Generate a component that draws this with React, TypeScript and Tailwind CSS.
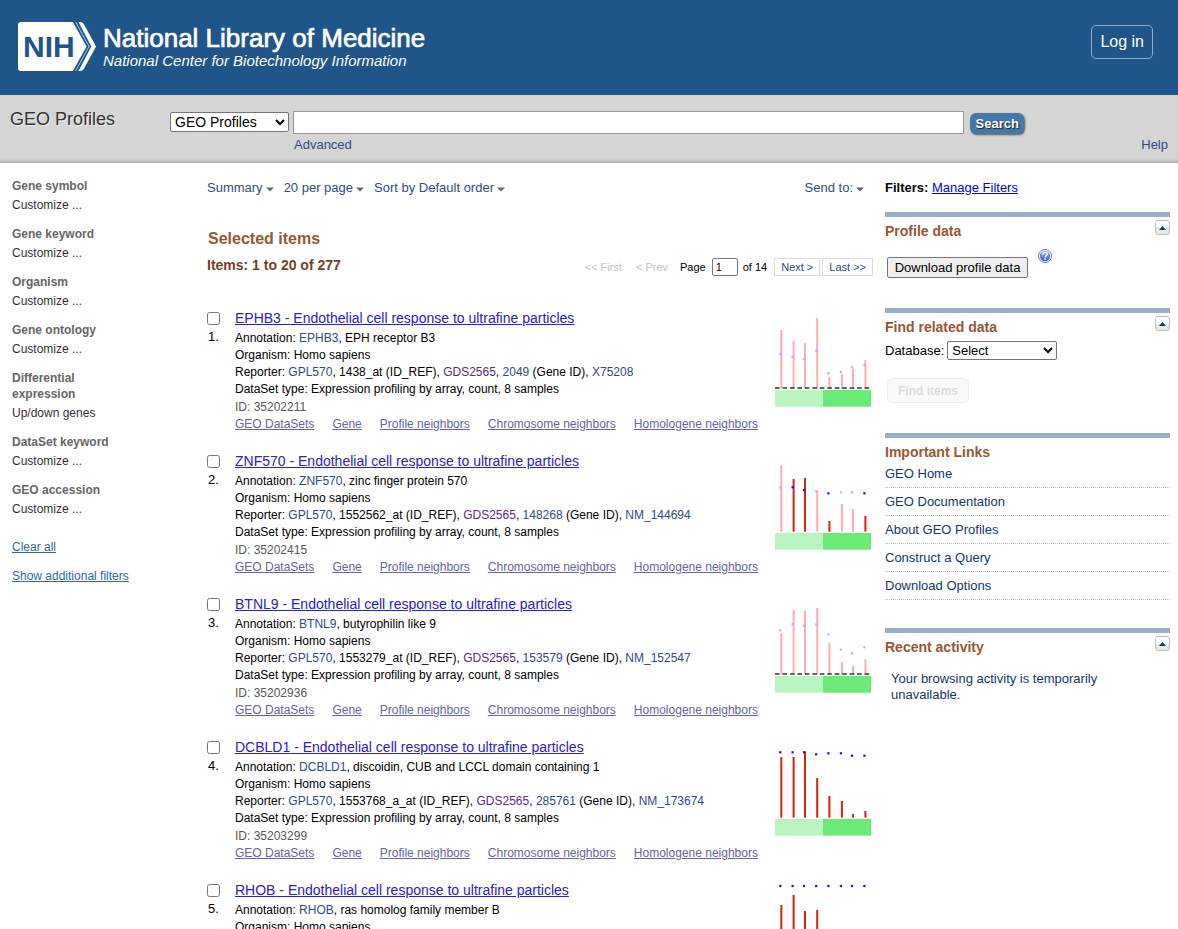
import React from "react";

type Level = "light" | "dark";

interface Chart {
  bars: number[];
  dots: number[];
  tones: Level[];
  dashed: boolean;
}

interface Profile {
  symbol: string;
  description: string;
  probe: string;
  geneId: string;
  accession: string;
  id: string;
  chart: Chart;
}

const allLight: Level[] = ["light", "light", "light", "light", "light", "light", "light", "light"];
const allDark: Level[] = ["dark", "dark", "dark", "dark", "dark", "dark", "dark", "dark"];

const profiles: Profile[] = [
  {
    symbol: "EPHB3",
    description: "EPH receptor B3",
    probe: "1438_at",
    geneId: "2049",
    accession: "X75208",
    id: "35202211",
    chart: {
      bars: [13, 24, 26, 1, 60, 57, 52, 43],
      dots: [37, 39.7, 42, 33.7, 56.3, 55, 50.3, 48],
      tones: allLight,
      dashed: true,
    },
  },
  {
    symbol: "ZNF570",
    description: "zinc finger protein 570",
    probe: "1552562_at",
    geneId: "148268",
    accession: "NM_144694",
    id: "35202415",
    chart: {
      bars: [5, 19, 18, 31, 61, 44, 49, 56],
      dots: [27.3, 27.3, 30, 31.3, 33.3, 32.3, 32.3, 33.3],
      tones: ["light", "dark", "dark", "light", "dark", "light", "light", "dark"],
      dashed: false,
    },
  },
  {
    symbol: "BTNL9",
    description: "butyrophilin like 9",
    probe: "1553279_at",
    geneId: "153579",
    accession: "NM_152547",
    id: "35202936",
    chart: {
      bars: [30, 7, 8, 5, 40, 59, 63, 56],
      dots: [27.3, 21.3, 22.7, 21.3, 31.3, 46.7, 50.3, 44.3],
      tones: allLight,
      dashed: true,
    },
  },
  {
    symbol: "DCBLD1",
    description: "discoidin, CUB and LCCL domain containing 1",
    probe: "1553768_a_at",
    geneId: "285761",
    accession: "NM_173674",
    id: "35203299",
    chart: {
      bars: [11, 11, 5.3, 32, 50, 55, 68, 65],
      dots: [6.3, 6.3, 6.3, 8.3, 7.3, 7.3, 9.7, 9.7],
      tones: allDark,
      dashed: false,
    },
  },
  {
    symbol: "RHOB",
    description: "ras homolog family member B",
    probe: "1553962_s_at",
    geneId: "388",
    accession: "BI668074",
    id: "35203482",
    chart: {
      bars: [16, 6, 22, 21, 50, 55, 58, 60],
      dots: [-3, -3, -3, -3, -3, -3, -3, -3],
      tones: allDark,
      dashed: false,
    },
  },
];

const barX = [6.3, 18.6, 30, 42.2, 54.4, 66.9, 78, 90.4];

function ProfileChart({ chart, label }: { chart: Chart; label: string }) {
  return (
    <svg width="96" height="96" viewBox="0 -5 96 96" role="img" aria-label={label} className="block">
      {barX.map((x, i) => (
        <rect
          key={"b" + i}
          x={x - 1}
          y={chart.bars[i]}
          width="2"
          height={71.7 - chart.bars[i]}
          fill={chart.tones[i] === "dark" ? "#d42410" : "#ffacac"}
        />
      ))}
      {barX.map((x, i) => (
        <rect
          key={"d" + i}
          x={x - 2.1}
          y={chart.dots[i] - 1.1}
          width="2.2"
          height="2.2"
          fill={chart.tones[i] === "dark" ? "#1010ee" : "#b0b0ff"}
        />
      ))}
      {chart.dashed && (
        <line x1="0" x2="96" y1="71" y2="71" stroke="#333" strokeWidth="1.6" strokeDasharray="4.6 2.87" />
      )}
      <rect x="0" y="73" width="48" height="16.7" fill="#b9f5bf" />
      <rect x="48" y="73" width="48" height="16.7" fill="#6cea78" />
    </svg>
  );
}

function Caret() {
  return (
    <svg width="8" height="5" viewBox="0 0 8 5" aria-hidden="true" className="mt-[3px]">
      <path d="M0 0.5h8L4 4.5z" fill="#666" />
    </svg>
  );
}

function NihMark() {
  return (
    <svg width="78" height="49" viewBox="0 0 78 49" aria-hidden="true">
      <path d="M3 0H54.8L68.6 24.5L54.8 49H3Q0 49 0 46V3Q0 0 3 0Z" fill="#fff" />
      <path d="M60.5 0H62Q64.5 0 65.8 2L78 24.5L65.8 47Q64.5 49 62 49H60.5L73.3 24.5Z" fill="#fff" />
      <path d="M57.6 0L71 24.5L57.6 49" fill="none" stroke="#dbe5ef" strokeWidth="0.8" />
      <text x="5" y="35" fontSize="30" fontWeight="bold" fill="#20558a">NIH</text>
    </svg>
  );
}

function Header() {
  return (
    <header className="flex h-[95px] items-start justify-between bg-[#20558a] px-[18px] text-white">
      <a href="#home" className="mt-[22px] flex gap-[7px]">
        <NihMark />
        <span className="block pt-px">
          <span className="block text-[26px] leading-[30px] [-webkit-text-stroke:0.7px_white]">National Library of Medicine</span>
          <span className="block text-[15px] leading-4 italic">National Center for Biotechnology Information</span>
        </span>
      </a>
      <button type="button" className="mt-[25px] mr-[7px] h-[34px] rounded-[5px] border border-[#8fabc7] px-2 text-base">
        Log in
      </button>
    </header>
  );
}

function SearchBar() {
  return (
    <form
      onSubmit={(e) => e.preventDefault()}
      className="flex h-[68px] items-start border-b border-[#b0b0b0] bg-[#d5d5d5] px-[10px] text-[#2f4a8b] shadow-[inset_0_-3px_3px_-2px_#aaa]"
    >
      <h1 className="mt-3 w-[160px] shrink-0 text-lg leading-6 text-[#333] [text-shadow:1px_1px_0_#eee]">GEO Profiles</h1>
      <select
        aria-label="Database"
        className="mt-[17px] mr-1 h-5 w-[119px] shrink-0 rounded-[2px] border border-[#767676] bg-white text-sm leading-none text-black"
      >
        <option>GEO Profiles</option>
      </select>
      <div className="mt-4 flex-1 text-[13px]">
        <input aria-label="Search term" type="text" className="block h-[23px] w-full border border-[#999] bg-white px-1 text-sm text-black" />
        <a href="#advanced" className="mt-[3px] ml-px block w-fit leading-4">Advanced</a>
      </div>
      <button
        type="submit"
        className="mt-[18px] ml-[6px] h-[21px] w-[54px] shrink-0 rounded-[6px] bg-[#4477aa] text-[13px] font-bold text-white shadow-[1px_1px_2px_#555] [text-shadow:1px_1px_1px_#222]"
      >
        Search
      </button>
      <a href="#help" className="mt-[42px] ml-[117px] text-[13px] leading-4">Help</a>
    </form>
  );
}

const filterGroups = [
  { title: "Gene symbol", item: "Customize ..." },
  { title: "Gene keyword", item: "Customize ..." },
  { title: "Organism", item: "Customize ..." },
  { title: "Gene ontology", item: "Customize ..." },
  { title: "Differential expression", item: "Up/down genes" },
  { title: "DataSet keyword", item: "Customize ..." },
  { title: "GEO accession", item: "Customize ..." },
];

function FilterSidebar() {
  return (
    <aside className="w-[196px] shrink-0 pt-[15px] pl-3 text-xs leading-4">
      <div className="flex w-[112px] flex-col gap-[13px]">
        {filterGroups.map((g) => (
          <section key={g.title}>
            <h2 className="font-bold text-[#666]">{g.title}</h2>
            <a href="#filter" className="mt-[3px] block text-[#333]">{g.item}</a>
          </section>
        ))}
      </div>
      <a href="#clear" className="mt-[22px] block w-fit text-[#336699] underline">Clear all</a>
      <a href="#more" className="mt-[13px] block w-fit text-[#336699] underline">Show additional filters</a>
    </aside>
  );
}

function MenuButton({ label }: { label: string }) {
  return (
    <button type="button" className="flex items-center gap-[3px] leading-4">
      {label}
      <Caret />
    </button>
  );
}

function Pager() {
  return (
    <nav aria-label="Pages" className="mt-[3px] flex items-center text-[11px] leading-4 text-[#2f4a8b]">
      <span className="text-[#c4c4c4]">&lt;&lt; First</span>
      <span className="ml-[14px] text-[#c4c4c4]">&lt; Prev</span>
      <label htmlFor="page-number" className="ml-3 text-black">Page</label>
      <input id="page-number" type="text" defaultValue="1" className="ml-[6px] h-[18px] w-[26px] rounded-[2px] border border-[#767676] bg-white px-[3px] text-black" />
      <span className="ml-[5px] text-black">of 14</span>
      <a href="#next" className="ml-[7px] border border-[#dcdcdc] px-[6px]">Next &gt;</a>
      <a href="#last" className="ml-[2px] border border-[#dcdcdc] px-[6px]">Last &gt;&gt;</a>
    </nav>
  );
}

const recordLinks = ["GEO DataSets", "Gene", "Profile neighbors", "Chromosome neighbors", "Homologene neighbors"];

function Record({ profile, index }: { profile: Profile; index: number }) {
  const boxId = "pick-" + profile.id;
  return (
    <li className="flex h-[143px] items-start">
      <div className="w-7 shrink-0 pt-[5px]">
        <input id={boxId} type="checkbox" className="block h-[13px] w-[13px]" />
        <label htmlFor={boxId} className="mt-1 block pl-px text-[13px] leading-4">{index + 1}.</label>
      </div>
      <div className="min-w-0 flex-1 text-xs leading-[17px]">
        <h3 className="text-[14px] leading-[22px]">
          <a href="#record" className="text-[#2a20c8] underline">
            {profile.symbol} - Endothelial cell response to ultrafine particles
          </a>
        </h3>
        <p className="mt-px">Annotation: <a href="#gene" className="text-[#2f4a8b]">{profile.symbol}</a>, {profile.description}</p>
        <p>Organism: Homo sapiens</p>
        <p>
          Reporter: <a href="#platform" className="text-[#2f4a8b]">GPL570</a>, {profile.probe} (ID_REF),{" "}
          <a href="#dataset" className="text-[#5a2a8a]">GDS2565</a>,{" "}
          <a href="#geneid" className="text-[#2f4a8b]">{profile.geneId}</a> (Gene ID),{" "}
          <a href="#accession" className="text-[#2f4a8b]">{profile.accession}</a>
        </p>
        <p>DataSet type: Expression profiling by array, count, 8 samples</p>
        <p className="mt-px text-[#575757]">ID: {profile.id}</p>
        <p className="flex gap-[18px] whitespace-nowrap">
          {recordLinks.map((l) => (
            <a key={l} href="#related" className="text-[#6464a8] underline">{l}</a>
          ))}
        </p>
      </div>
      <a href="#chart" className="mt-[5px] mr-[2px] shrink-0">
        <ProfileChart chart={profile.chart} label={profile.symbol + " expression"} />
      </a>
    </li>
  );
}

function Results() {
  return (
    <main className="min-w-0 flex-1 pt-[17px]">
      <div className="flex items-center justify-between pr-[9px] text-[13px] text-[#2f4a8b]">
        <div className="flex gap-[10px]">
          <MenuButton label="Summary" />
          <MenuButton label="20 per page" />
          <MenuButton label="Sort by Default order" />
        </div>
        <MenuButton label="Send to:" />
      </div>
      <h2 className="mt-[33px] pl-px text-base leading-5 font-bold text-[#985735]">Selected items</h2>
      <div className="mt-[6px] flex items-start justify-between">
        <h3 className="text-sm leading-5 font-bold text-[#724128]">Items: 1 to 20 of 277</h3>
        <Pager />
      </div>
      <ol className="mt-[31px]">
        {profiles.map((p, i) => (
          <Record key={p.id} profile={p} index={i} />
        ))}
      </ol>
    </main>
  );
}

function Portlet({ title, collapsible = true, children }: { title: string; collapsible?: boolean; children: React.ReactNode }) {
  return (
    <section className="border-t-[5px] border-[#97b0c8]">
      <div className="flex h-[23px] items-start justify-between">
        <h2 className="pt-1 text-sm leading-5 font-bold text-[#985735]">{title}</h2>
        {collapsible && (
          <button
            type="button"
            aria-label={"Collapse " + title}
            className="mt-[3px] flex h-[15px] w-[15px] items-center justify-center rounded-[3px] border border-[#bbb] bg-linear-to-b from-white from-50% to-[#e8e8e8] to-50%"
          >
            <svg width="7" height="4" viewBox="0 0 7 4" aria-hidden="true">
              <path d="M3.5 0L7 4H0z" fill="#14376c" />
            </svg>
          </button>
        )}
      </div>
      {children}
    </section>
  );
}

function HelpIcon() {
  return (
    <svg width="14" height="14" viewBox="0 0 14 14" aria-hidden="true">
      <defs>
        <linearGradient id="help-fill" x1="0" y1="0" x2="0" y2="1">
          <stop offset="0" stopColor="#a9bdf0" />
          <stop offset="1" stopColor="#3558c8" />
        </linearGradient>
      </defs>
      <circle cx="7" cy="7" r="6.5" fill="#fff" stroke="#5f7fd0" />
      <circle cx="7" cy="7" r="5.3" fill="url(#help-fill)" />
      <path d="M5 5.6C5 4.2 6 3.6 7.1 3.6S9.2 4.3 9.2 5.4C9.2 6.7 7.2 6.8 7.2 8.3" fill="none" stroke="#fff" strokeWidth="1.5" />
      <rect x="6.4" y="9.2" width="1.6" height="1.5" fill="#fff" />
    </svg>
  );
}

const importantLinks = ["GEO Home", "GEO Documentation", "About GEO Profiles", "Construct a Query", "Download Options"];

function RightColumn() {
  return (
    <aside className="w-[285px] shrink-0 pt-[17px] text-[13px] leading-4">
      <p>
        <b>Filters:</b> <a href="#filters" className="text-[#0000ee] underline">Manage Filters</a>
      </p>
      <div className="mt-4">
        <Portlet title="Profile data">
          <div className="flex h-[68px] items-start gap-[10px] pt-[9px] pl-[2px]">
            <button type="button" className="mt-2 h-[21px] w-[141px] rounded-[2px] border border-[#767676] bg-[#efefef]">
              Download profile data
            </button>
            <a href="#help" aria-label="Help on profile data"><HelpIcon /></a>
          </div>
        </Portlet>
        <Portlet title="Find related data">
          <div className="h-[97px] pt-[5px]">
            <div className="flex items-center gap-[3px]">
              <label htmlFor="related-db">Database:</label>
              <select id="related-db" className="h-[19px] w-[110px] rounded-[2px] border border-[#767676] bg-white leading-none">
                <option>Select</option>
              </select>
            </div>
            <button
              type="button"
              disabled
              className="mt-[18px] ml-[2px] block h-[25px] w-[82px] rounded-[5px] border border-[#ededed] bg-[#fafafa] text-xs font-bold text-[#dcdcdc]"
            >
              Find items
            </button>
          </div>
        </Portlet>
        <Portlet title="Important Links" collapsible={false}>
          <ul className="pb-7 text-[#14376c]">
            {importantLinks.map((l) => (
              <li key={l} className="border-b border-dotted border-[#bbb] pt-[6px] pb-[5px] first:pt-[5px]">
                <a href="#link">{l}</a>
              </li>
            ))}
          </ul>
        </Portlet>
        <Portlet title="Recent activity">
          <p className="mt-[15px] w-[230px] pl-[6px] text-[#14376c]">Your browsing activity is temporarily unavailable.</p>
        </Portlet>
      </div>
    </aside>
  );
}

export default function App() {
  return (
    <div className="h-screen overflow-hidden bg-white font-['Liberation_Sans',Arial,sans-serif] text-black">
      <Header />
      <SearchBar />
      <div className="flex pr-2">
        <FilterSidebar />
        <div className="flex min-w-0 flex-1 gap-3 pl-[11px]">
          <Results />
          <RightColumn />
        </div>
      </div>
    </div>
  );
}
